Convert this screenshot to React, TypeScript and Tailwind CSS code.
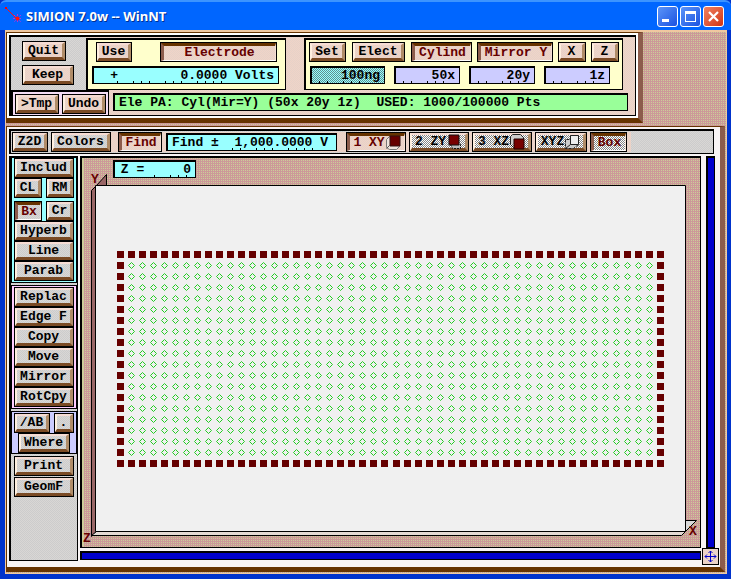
import type { ReactNode } from 'react';
import clsx from 'clsx';

const PINK = 'bg-[conic-gradient(#cccc99_25%,#cc9999_0)] bg-[length:2px_2px]';
const GREY = 'bg-[repeating-conic-gradient(#cccccc_0_25%,#d9d7d5_0_50%)] bg-[length:2px_2px]';
const ROSE = 'bg-[repeating-conic-gradient(#f0d4c8_0_25%,#e6d2c8_0_50%)] bg-[length:2px_2px]';
const DIM = 'bg-[repeating-conic-gradient(#ffffff_0_25%,#858585_0_50%)] bg-[length:2px_2px]';

type KeyProps = {
  children: ReactNode;
  className?: string;
  pressed?: boolean;
  tone?: 'grey' | 'rose' | 'dim';
};

function Key({ children, className, pressed, tone = 'grey' }: KeyProps) {
  return (
    <button
      type="button"
      aria-pressed={pressed}
      className={clsx('h-5 shrink-0 border border-black', pressed ? 'text-[#660000]' : 'text-black', className)}
    >
      <span
        className={clsx(
          'flex h-full items-center justify-center whitespace-pre',
          pressed
            ? 'border-t-[3px] border-r border-b border-l-[3px] border-t-[#663300] border-r-[#f4e0d4] border-b-white border-l-[#8c5c4c]'
            : 'border-t-2 border-r-[3px] border-b-[3px] border-l-2 border-t-[#f6dcd4] border-r-[#b08c68] border-b-[#7a4a24] border-l-[#fff0e0]',
          tone === 'grey' && GREY,
          tone === 'rose' && ROSE,
          tone === 'dim' && DIM,
        )}
      >
        {children}
      </span>
    </button>
  );
}

type FieldProps = {
  label: string;
  value: string;
  className: string;
  ticks: number[];
};

function Field({ label, value, className, ticks }: FieldProps) {
  return (
    <label className="relative block h-[18px] shrink-0">
      <input
        aria-label={label}
        defaultValue={value}
        className={clsx(
          'block h-full border-t-2 border-r border-b border-l-2 border-black leading-[15px] whitespace-pre outline-none',
          className,
        )}
      />
      <svg className="pointer-events-none absolute bottom-0 left-0 h-1 w-full" aria-hidden="true">
        {ticks.map((x) => (
          <rect key={x} x={x} y="1" width="1" height="2" />
        ))}
      </svg>
    </label>
  );
}

function Cube({ face }: { face: 'front' | 'side' | 'top' | 'none' }) {
  return (
    <svg width="16" height="16" viewBox="0 0 16 16" aria-hidden="true">
      {face === 'front' && (
        <>
          <path d="M4.500 1.500l-3 3v8l3 2h7l3-3v-10z" fill="#eee4de" stroke="#777" />
          <path d="M1.500 13.500l3-3" stroke="#555" />
          <path d="M5 1h10v10H5z" fill="#660000" stroke="#331111" />
        </>
      )}
      {face === 'side' && (
        <>
          <path d="M4.500 10.500l2 4h8v-4z" fill="#bbb" stroke="#111" strokeDasharray="2 1" />
          <path d="M3 1h10v10H3z" fill="#770000" stroke="#111" />
        </>
      )}
      {face === 'top' && (
        <>
          <path d="M1.500 10.500v-8l2-2h8l3 3v2M1.500 10.500l3 3" fill="#ccc" stroke="#222" />
          <path d="M5 5h10v10H5z" fill="#770000" stroke="#220000" />
        </>
      )}
      {face === 'none' && (
        <>
          <path d="M5.500 5.500h-4v9h8l5-4" fill="#ccc" stroke="#222" strokeDasharray="3 1" />
          <path d="M6.500 1.500h8v9h-8z" fill="#eee" stroke="#222" />
          <path d="M1.500 14.500l5-4" stroke="#222" />
        </>
      )}
    </svg>
  );
}

function TitleBar() {
  return (
    <header className="flex h-[30px] items-center rounded-t-md border-t-2 border-[#3c94ff] bg-[#0066ff] pr-[7px] pl-1">
      <svg width="20" height="20" viewBox="0 0 20 20" aria-hidden="true">
        <path d="M2 2l10 10" stroke="#ff1010" />
        <path d="M1 1h2v2H1z" fill="#f00" />
        <path d="M13.500 8v9M9 12.500h9M10 9l7 7M17 9l-7 7" stroke="#b030e0" strokeDasharray="2 1" />
        <circle cx="13.500" cy="12.500" r="2" fill="#ff1010" />
      </svg>
      <h1 className="ml-[2px] flex-1 font-['Open_Sans',sans-serif] text-[13px] font-bold text-white [text-shadow:1px_1px_0_#003090]">
        SIMION 7.0w -- WinNT
      </h1>
      <div className="flex gap-[2px]">
        <button type="button" aria-label="Minimize" className="size-[21px] rounded-[3px] border border-white bg-linear-to-br from-[#5c94f8] to-[#1c50e0]">
          <svg viewBox="0 0 19 19" aria-hidden="true">
            <path d="M4 12h7v3H4z" fill="#fff" />
          </svg>
        </button>
        <button type="button" aria-label="Maximize" className="size-[21px] rounded-[3px] border border-white bg-linear-to-br from-[#5c94f8] to-[#1c50e0]">
          <svg viewBox="0 0 19 19" aria-hidden="true">
            <path d="M4 4h11v11H4zM5 7v7h9V7z" fill="#fff" fillRule="evenodd" />
          </svg>
        </button>
        <button type="button" aria-label="Close" className="size-[21px] rounded-[3px] border border-white bg-linear-to-br from-[#f08060] to-[#d03008]">
          <svg viewBox="0 0 19 19" aria-hidden="true">
            <path d="M5 5l9 9M14 5l-9 9" stroke="#fff" strokeWidth="2.2" />
          </svg>
        </button>
      </div>
    </header>
  );
}

const SIZE_TICKS = [9, 17, 33, 41, 49];

function ControlPanel() {
  return (
    <section className="w-fit border-t border-r-[5px] border-b-[5px] border-l border-t-[#663300] border-r-[#8c5c4c] border-b-[#663300] border-l-[#663300]">
      <div className="border-2 border-white">
        <div className={clsx('flex flex-col border-t-2 border-r border-b border-l-2 border-black', ROSE)}>
          <div className="flex">
            <div className={clsx('flex h-[53px] w-[75px] flex-col gap-1 pt-1 pl-[11px]', GREY)}>
              <Key tone="rose" className="w-11">Quit</Key>
              <Key tone="rose" className="w-[52px]">Keep</Key>
            </div>
            <div className="mt-px flex h-[52px] w-[200px] flex-col gap-1 border-t-2 border-r border-b border-l-2 border-black bg-[#ffffcc] pt-[2px] pl-1">
              <div className="flex justify-between pr-2 pl-1">
                <Key tone="rose" className="w-9">Use</Key>
                <Key tone="rose" pressed className="w-[117px]">Electrode</Key>
              </div>
              <Field
                label="Electrode potential"
                value="+        0.0000 Volts"
                className="w-[187px] bg-[#99ffff] pr-1 text-right"
                ticks={[25, 41, 49, 57, 73, 81, 89, 105, 113, 121, 129]}
              />
            </div>
            <div className="mt-px mr-3 ml-[18px] flex h-[52px] flex-col gap-1 border-t-2 border-r border-b border-l-2 border-black bg-[#ffffcc] px-[3px] pt-[2px]">
              <div className="flex gap-[5px]">
                <Key tone="rose" className="w-[37px]">Set</Key>
                <Key tone="rose" className="mx-px w-[53px]">Elect</Key>
                <Key tone="rose" pressed className="w-[61px]">Cylind</Key>
                <Key tone="rose" pressed className="w-[76px]">Mirror Y</Key>
                <Key tone="rose" className="w-7">X</Key>
                <Key tone="rose" className="w-7">Z</Key>
              </div>
              <div className="flex gap-[9px] pl-px">
                <Field
                  label="Scaling"
                  value="100ng"
                  className="w-[75px] bg-[repeating-conic-gradient(#99ffff_0_25%,#5f8f8f_0_50%)] bg-[length:2px_2px] pr-1 text-right"
                  ticks={SIZE_TICKS}
                />
                <Field label="Size in x" value="50x" className="w-[66px] bg-[#ccccff] pr-1 text-right" ticks={SIZE_TICKS} />
                <Field label="Size in y" value="20y" className="w-[66px] bg-[#ccccff] pr-1 text-right" ticks={SIZE_TICKS} />
                <Field label="Size in z" value="1z" className="w-[66px] bg-[#ccccff] pr-1 text-right" ticks={SIZE_TICKS} />
              </div>
            </div>
          </div>
          <div className="flex">
            <div className="flex h-[25px] gap-[3px] border-t-2 border-r border-l-2 border-black bg-[#f4dcf4] p-[2px]">
              <Key tone="rose" className="w-11">&gt;Tmp</Key>
              <Key tone="rose" className="w-11">Undo</Key>
            </div>
            <output className="mt-[3px] mr-[7px] ml-1 h-[18px] flex-1 border-t-2 border-r border-b border-l-2 border-black bg-[#99ff99] pl-1 leading-[15px] whitespace-pre">
              {'Ele PA: Cyl(Mir=Y) (50x 20y 1z)  USED: 1000/100000 Pts'}
            </output>
          </div>
        </div>
      </div>
    </section>
  );
}

function Toolbar() {
  return (
    <nav className={clsx('mr-1 flex border-t-2 border-r border-b border-l-2 border-black pt-px pb-px pl-px', GREY)}>
      <Key className="w-9">Z2D</Key>
      <Key className="ml-[3px] w-[60px]">Colors</Key>
      <div className={clsx('flex gap-[3px] pr-1 pl-[7px]', ROSE)}>
        <Key tone="rose" pressed className="w-11">Find</Key>
        <div className="pt-px pr-[6px] pl-px">
          <Field
            label="Find potential"
            value="Find ±  1,000.0000 V"
            className="w-[171px] bg-[#99ffff] pl-1"
            ticks={[66, 74, 90, 98, 106, 122, 130, 138, 146]}
          />
        </div>
        <Key tone="rose" pressed className="w-[60px]">1 XY<Cube face="front" /></Key>
        <Key tone="dim" className="w-[60px]">2 ZY<Cube face="side" /></Key>
        <Key tone="dim" className="w-[60px]">3 XZ<Cube face="top" /></Key>
        <Key tone="dim" className="w-[52px]">XYZ<Cube face="none" /></Key>
        <Key tone="dim" pressed className="w-[37px]">Box</Key>
      </div>
    </nav>
  );
}

function ToolGroup({ className, children }: { className: string; children: ReactNode }) {
  return <div className={clsx('flex flex-col border-x border-b border-black px-[2px]', className)}>{children}</div>;
}

function Sidebar() {
  return (
    <aside className={clsx('mb-1 flex flex-col border-t-2 border-r border-b border-l-2 border-black', GREY)}>
      <ToolGroup className="bg-[#99ffff] pb-px">
        <Key>Includ</Key>
        <div className="flex justify-between">
          <Key className="w-7">CL</Key>
          <Key className="w-7">RM</Key>
        </div>
        <div className="mt-[3px] flex justify-between">
          <Key pressed className="w-7">Bx</Key>
          <Key className="w-7">Cr</Key>
        </div>
        <Key>Hyperb</Key>
        <Key>Line</Key>
        <Key>Parab</Key>
      </ToolGroup>
      <ToolGroup className="mt-[2px] border-t bg-[#ffccff] py-px">
        <Key>Replac</Key>
        <Key>Edge F</Key>
        <Key>Copy</Key>
        <Key>Move</Key>
        <Key>Mirror</Key>
        <Key>RotCpy</Key>
      </ToolGroup>
      <ToolGroup className="mt-[2px] border-t bg-[#ccccff] pt-px">
        <div className="flex justify-between">
          <Key className="w-9">/AB</Key>
          <Key className="w-5">.</Key>
        </div>
        <Key className="mx-1">Where</Key>
      </ToolGroup>
      <div className="flex flex-col gap-px px-[3px] pt-[2px]">
        <Key>Print</Key>
        <Key>GeomF</Key>
      </div>
    </aside>
  );
}

const COLS = 50;
const ROWS = 20;
const PITCH = 11;

function PointGrid() {
  const points: ReactNode[] = [];
  for (let r = 0; r < ROWS; r++) {
    for (let c = 0; c < COLS; c++) {
      const x = 35 + c * PITCH + (c < COLS / 2 ? 0 : 1);
      const y = 93 + r * PITCH;
      const edge = r === 0 || c === 0 || r === ROWS - 1 || c === COLS - 1;
      points.push(
        edge ? (
          <rect key={`${r}-${c}`} x={x} y={y} width="7" height="7" fill="#660000" />
        ) : (
          <path key={`${r}-${c}`} d={`M${x + 3.5} ${y + 0.5}l3 3l-3 3l-3-3z`} fill="none" stroke="#22cc22" />
        ),
      );
    }
  }
  return <g>{points}</g>;
}

function Canvas() {
  return (
    <main className={clsx('relative flex min-w-0 border-t-2 border-r border-b border-l-2 border-black', PINK)}>
      <svg viewBox="0 0 618 388" preserveAspectRatio="xMinYMin meet" className="min-h-0 w-full flex-1">
        <rect width="2" height="388" fill="#cccc99" />
        <path d="M9.500 32.500l5-5v346l-5 5z" fill="#996666" stroke="#000" />
        <path d="M14.500 27.500l10-11v11z" fill="#996666" stroke="#000" />
        <path d="M9.500 377.500l5-4h589l-4 4z" fill="#e4dad4" stroke="#000" />
        <path d="M603.500 362.500h11l-11 11z" fill="#d8d8d8" stroke="#000" />
        <path d="M13.500 27.500h590v346h-590z" fill="#f0f0f0" stroke="#000" />
        <PointGrid />
        <g fill="#660000" className="text-[13px]">
          <text x="9" y="25">Y</text>
          <text x="1" y="384">Z</text>
          <text x="607" y="377">X</text>
        </g>
      </svg>
      <div className="absolute top-[2px] left-[31px]">
        <Field label="Z layer" value="Z =     0" className="w-[83px] bg-[#99ffff] pr-1 text-right" ticks={[41, 57, 65, 73]} />
      </div>
    </main>
  );
}

export default function App() {
  return (
    <div className="flex min-h-screen flex-col bg-[#0033cc] font-['Liberation_Mono',monospace] text-[13px] leading-[14px] font-bold text-black">
      <TitleBar />
      <div className={clsx('mr-1 mb-[5px] ml-[5px] flex flex-1 flex-col gap-[3px] border border-t-2 border-[#f0c8a0] pb-px', PINK)}>
        <ControlPanel />
        <section className="mr-px flex flex-1 flex-col border-t border-r-[5px] border-b-[5px] border-l border-t-[#663300] border-r-[#8c5c4c] border-b-[#663300] border-l-[#663300]">
          <div className="flex flex-1 flex-col gap-[2px] bg-[#f8f4f4] p-[2px]">
            <Toolbar />
            <div className="grid flex-1 grid-cols-[69px_minmax(0,1fr)_17px] grid-rows-[1fr]">
              <Sidebar />
              <div className="ml-[2px] grid grid-rows-[minmax(0,1fr)_17px]">
                <Canvas />
                <div className="mt-[3px] mb-[5px] border-t-2 border-r border-b border-l-2 border-black bg-[#0000cc]" />
              </div>
              <div className="ml-px flex flex-col">
                <div className="mr-[3px] ml-1 flex-1 border-t-2 border-r border-b border-l-2 border-black bg-[#0000cc]" />
                <button type="button" aria-label="Pan view" className={clsx('size-[17px] border border-black', ROSE)}>
                  <svg viewBox="0 0 15 15" aria-hidden="true">
                    <path d="M7.500 2v11M2 7.500h11M5.500 4l2-2l2 2M5.500 11l2 2l2-2M4 5.500l-2 2l2 2M11 5.500l2 2l-2 2" fill="none" stroke="#0000cc" />
                  </svg>
                </button>
              </div>
            </div>
          </div>
        </section>
      </div>
    </div>
  );
}
